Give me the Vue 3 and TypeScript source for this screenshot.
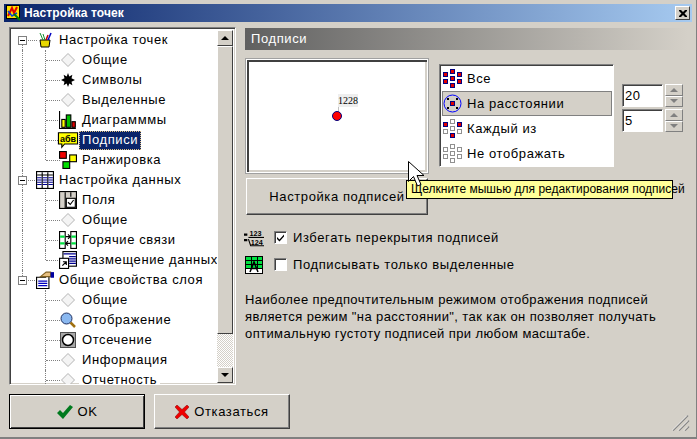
<script setup lang="ts">
interface TreeRow {
  label: string;
  icon: string;
  level: 0 | 1;
  selected?: boolean;
  last?: boolean;
  trunk?: boolean;
  end?: boolean;
}

const rows: TreeRow[] = [
  { label: 'Настройка точек', icon: 'pot', level: 0, trunk: true },
  { label: 'Общие', icon: 'diamond', level: 1, trunk: true },
  { label: 'Символы', icon: 'star', level: 1, trunk: true },
  { label: 'Выделенные', icon: 'diamond', level: 1, trunk: true },
  { label: 'Диаграмммы', icon: 'bars', level: 1, trunk: true },
  { label: 'Подписи', icon: 'note', level: 1, trunk: true, selected: true },
  { label: 'Ранжировка', icon: 'rank', level: 1, trunk: true, last: true },
  { label: 'Настройка данных', icon: 'table', level: 0, trunk: true },
  { label: 'Поля', icon: 'fields', level: 1, trunk: true },
  { label: 'Общие', icon: 'diamond', level: 1, trunk: true },
  { label: 'Горячие связи', icon: 'links', level: 1, trunk: true },
  { label: 'Размещение данных', icon: 'place', level: 1, trunk: true, last: true },
  { label: 'Общие свойства слоя', icon: 'hand', level: 0, end: true },
  { label: 'Общие', icon: 'diamond', level: 1 },
  { label: 'Отображение', icon: 'lens', level: 1 },
  { label: 'Отсечение', icon: 'clip', level: 1 },
  { label: 'Информация', icon: 'diamond', level: 1 },
  { label: 'Отчетность', icon: 'diamond', level: 1 },
];

const bigIcons = ['bars', 'note', 'rank', 'fields', 'links', 'place', 'table', 'hand'];

const dots: [number, number][] = [[7, 0], [0, 3], [14, 3], [7, 7], [0, 10], [14, 10], [7, 14]];

const modes = [
  { label: 'Все', on: [0, 1, 2, 3, 4, 5, 6] },
  { label: 'На расстоянии', on: [], ring: true },
  { label: 'Каждый из', on: [1, 2, 6] },
  { label: 'Не отображать', on: [] as number[] },
];

const spins = ['20', '5'];

const description =
  'Наиболее предпочтительным режимом отображения подписей является режим "на расстоянии", так как он позволяет получать оптимальную густоту подписей при любом масштабе.';
</script>

<template>
  <div class="window">
    <header class="titlebar">
      <svg class="title-icon" viewBox="0 0 16 16" aria-hidden="true">
        <rect x="0.5" y="0.5" width="13" height="13" fill="#ffe000" stroke="#000" />
        <path d="M2 11 6 3l2 5 3-6" fill="none" stroke="#e00000" stroke-width="2" />
        <path d="M2 6l4 5 5-3" fill="none" stroke="#0040e0" stroke-width="1.5" />
        <path d="M8 9l6 6" stroke="#008000" stroke-width="2" />
      </svg>
      <span class="title-text">Настройка точек</span>
      <button type="button" class="close" aria-label="Закрыть">
        <svg viewBox="0 0 8 7" width="8" height="7" aria-hidden="true">
          <path d="M0 0h2l2 2 2-2h2v1L5.500 3.500 8 6v1H6L4 5 2 7H0V6l2.500-2.500L0 1z" fill="#000" />
        </svg>
      </button>
    </header>

    <div class="content">
      <div class="tree-box">
        <ul class="tree">
          <li v-for="(row, i) in rows" :key="i" class="row" :class="`row--${row.level}`">
            <i v-if="row.trunk" class="guide guide--trunk" :class="{ 'guide--trunk-top': row.level === 0 && i === 0 }" />
            <i v-if="row.end" class="guide guide--trunk guide--trunk-end" />
            <template v-if="row.level === 1">
              <i class="guide guide--branch" :class="{ 'guide--branch-last': row.last }" />
              <i class="guide guide--tick" />
            </template>
            <template v-else>
              <i class="guide guide--tick-top" />
              <span class="expander"><i /></span>
            </template>

            <svg
              class="row-icon"
              :class="{ 'row-icon--big': bigIcons.includes(row.icon), 'row-icon--small': row.icon === 'star' }"
              viewBox="0 0 16 16"
              aria-hidden="true"
            >
              <template v-if="row.icon === 'diamond'">
                <path d="M8 1.500 14.500 8 8 14.500 1.500 8z" fill="#f4f4f4" stroke="#b4b4b4" />
              </template>
              <template v-else-if="row.icon === 'star'">
                <path d="M8 0 9.500 4 13 2l-1 4 4 2-4 2 1 4-3.500-2L8 16l-1.500-4L3 14l1-4-4-2 4-2-1-4 3.500 2z" fill="#000" />
              </template>
              <template v-else-if="row.icon === 'pot'">
                <path d="M3 8h10l-1 7H4z" fill="#e8d800" stroke="#000" />
                <path d="M3 1l3 7M6 2l2 6" stroke="#109030" stroke-width="1" />
                <path d="M9 8l2-5" stroke="#c00000" stroke-width="1.500" />
                <path d="M11 8l3-7" stroke="#0000c0" stroke-width="1.500" />
              </template>
              <template v-else-if="row.icon === 'bars'">
                <path d="M.5 0v15.500H15" fill="none" stroke="#000" />
                <rect x="2.500" y="7.500" width="3" height="7" fill="#ffff00" stroke="#000" />
                <rect x="6.500" y="3.500" width="4" height="11" fill="#00c000" stroke="#000" />
                <rect x="11.500" y="9.500" width="3" height="5" fill="#e00000" stroke="#000" />
              </template>
              <template v-else-if="row.icon === 'note'">
                <path d="M-.5 1.500h17v10H5l-2.500 3v-3H-.5z" fill="#ffff00" stroke="#000" />
                <text x="8" y="9.500" text-anchor="middle" class="note-text">абв</text>
              </template>
              <template v-else-if="row.icon === 'rank'">
                <rect x="0.500" y="0.500" width="6" height="6" fill="#f00000" stroke="#000" />
                <rect x="9.500" y="3.500" width="6" height="6" fill="#ffff00" stroke="#000" />
                <rect x="3.500" y="9.500" width="6" height="6" fill="#00e000" stroke="#000" />
              </template>
              <template v-else-if="row.icon === 'table'">
                <rect x="0.500" y="0.500" width="15" height="15" fill="#fff" stroke="#000" />
                <path d="M1 3.500h14M5.500 1v14M10.500 1v14" stroke="#000" />
                <path d="M6 6h4M6 8h4M6 10h4M6 12h4M11 6h4M11 8h4M11 10h4M11 12h4M1 6h4M1 8h4M1 10h4M1 12h4" stroke="#000090" />
              </template>
              <template v-else-if="row.icon === 'fields'">
                <rect x="0.500" y="0.500" width="15" height="15" fill="#d4d0c8" stroke="#000" />
                <path d="M5.500 1v14M10.500 1v4" stroke="#000" />
                <rect x="6.500" y="6.500" width="8" height="8" fill="#fff" stroke="#000" />
                <path d="M8 10l2 2 3-4" fill="none" stroke="#000" />
              </template>
              <template v-else-if="row.icon === 'links'">
                <rect x="0.500" y="0.500" width="5" height="15" fill="#fff" stroke="#000" />
                <rect x="10.500" y="0.500" width="5" height="15" fill="#fff" stroke="#000" />
                <path d="M1 4h4v2H1zM1 10h4v2H1zM11 4h4v2h-4zM11 10h4v2h-4z" fill="#00e040" />
                <path d="M6 5h4M8 3l2 2-2 2M10 11H6M8 9l-2 2 2 2" fill="none" stroke="#000" />
              </template>
              <template v-else-if="row.icon === 'place'">
                <rect x="3.500" y="0.500" width="12" height="13" fill="#fff" stroke="#000" />
                <path d="M4 2.500h11M9 5h6M9 7h6M9 9h6M9 11h6" stroke="#000090" />
                <rect x="0.500" y="6.500" width="8" height="9" fill="#fff" stroke="#000" />
                <path d="M3 13l3-3M3.500 9.500H6.500V12.500" fill="none" stroke="#000" />
              </template>
              <template v-else-if="row.icon === 'hand'">
                <path d="M.5 5.500h8l3-3v13H.5z" fill="#fff" stroke="#000" />
                <path d="M2 9h8M2 11h8M2 13h8" stroke="#0000c0" />
                <path d="M4 5l5-4h4v4H8z" fill="#e8c080" stroke="#806020" />
                <rect x="13" y="1" width="3" height="5" fill="#0000a0" />
              </template>
              <template v-else-if="row.icon === 'lens'">
                <circle cx="6.500" cy="6.500" r="5.500" fill="#8ab8f0" stroke="#203060" />
                <path d="M10.500 10.500 15 15" stroke="#a07010" stroke-width="2.500" />
              </template>
              <template v-else-if="row.icon === 'clip'">
                <rect x="0.500" y="0.500" width="15" height="15" fill="#a8a8a8" stroke="#505050" />
                <circle cx="8" cy="8" r="5.500" fill="#fff" stroke="#000" stroke-width="1.500" />
              </template>
            </svg>

            <span class="row-label" :class="{ 'row-label--selected': row.selected }">{{ row.label }}</span>
          </li>
        </ul>

        <div class="scrollbar">
          <button type="button" class="scroll-btn" aria-label="Вверх"><i class="arrow-up" /></button>
          <div class="scroll-thumb" />
          <div class="scroll-track" />
          <button type="button" class="scroll-btn" aria-label="Вниз"><i class="arrow-down" /></button>
        </div>
      </div>

      <section class="pane">
        <h2 class="pane-title">Подписи</h2>

        <div class="top">
          <div class="preview-col">
            <div class="preview">
              <span class="map-label">1228</span>
              <i class="map-leader" />
              <i class="map-dot" />
            </div>
            <button type="button" class="btn setup">Настройка подписей</button>
          </div>

          <ul class="modes">
            <li v-for="(mode, m) in modes" :key="m" class="mode" :class="{ 'mode--active': mode.ring }">
              <svg class="mode-icon" viewBox="0 0 19 19" aria-hidden="true">
                <template v-if="mode.ring">
                  <circle cx="9.500" cy="9.500" r="8.500" fill="none" stroke="#0000ff" />
                  <path d="M4 4h2v2H4zM7 7h1v1H7zM13 4h2v2h-2zM11 7h1v1h-1zM4 13h2v2H4zM7 11h1v1H7zM13 13h2v2h-2zM11 11h1v1h-1z" fill="#000" />
                  <rect x="7.500" y="7.500" width="4" height="4" fill="#e00000" stroke="#000080" />
                </template>
                <template v-else>
                  <rect
                    v-for="(d, k) in dots"
                    :key="k"
                    :x="d[0] + 0.5"
                    :y="d[1] + 0.5"
                    width="4"
                    height="4"
                    :fill="mode.on.includes(k) ? '#e00000' : '#fff'"
                    :stroke="mode.on.includes(k) ? '#000080' : '#909090'"
                  />
                </template>
              </svg>
              <span>{{ mode.label }}</span>
            </li>
          </ul>

          <div class="spins">
            <div v-for="s in spins" :key="s" class="spin">
              <input class="spin-input" :value="s" aria-label="Значение" />
              <div class="spin-btns">
                <button type="button" class="spin-btn" aria-label="Больше"><i class="tri-up" /></button>
                <button type="button" class="spin-btn" aria-label="Меньше"><i class="tri-down" /></button>
              </div>
            </div>
          </div>
        </div>

        <div class="options">
          <label class="option">
            <svg class="opt-icon" viewBox="0 0 18 16" aria-hidden="true">
              <path d="M0 4h3v2H0zM0 9h3v2H0z" fill="#000" />
              <text x="5" y="6.500" class="opt-num">123</text>
              <path d="M4 7.500h14" stroke="#000" />
              <text x="6" y="14.500" class="opt-num">124</text>
              <path d="M4 9l2 6h12" fill="none" stroke="#000" />
            </svg>
            <span class="check"><svg viewBox="0 0 9 9" width="9" height="9" aria-hidden="true"><path d="M1 4l2.500 2.500L8 1.500v2L3.500 8.500 1 6z" fill="#000" /></svg></span>
            <span>Избегать перекрытия подписей</span>
          </label>
          <label class="option">
            <svg class="opt-icon" viewBox="0 0 18 18" aria-hidden="true">
              <rect x="0.500" y="0.500" width="17" height="17" fill="#00e040" stroke="#000" />
              <path d="M1 4.500h16M1 8.500h16M1 12.500h16M6.500 1v12M12.500 1v12" stroke="#000" />
              <rect x="1" y="13" width="16" height="4" fill="#fff" />
              <path d="M5 16 9 6l4 10M6.500 12.500h5" fill="none" stroke="#000" stroke-width="1.500" />
            </svg>
            <span class="check" />
            <span>Подписывать только выделенные</span>
          </label>
        </div>

        <p class="description">{{ description }}</p>
      </section>
    </div>

    <footer class="footer">
      <button type="button" class="btn action action--default">
        <svg viewBox="0 0 16 14" width="16" height="14" aria-hidden="true">
          <path d="M0 8l3-3 3 3 7-8 3 2-10 12z" fill="#007a1e" />
        </svg>
        <span>OK</span>
      </button>
      <button type="button" class="btn action">
        <svg viewBox="0 0 14 14" width="14" height="14" aria-hidden="true">
          <path d="M2 0l5 4.500L12 0l2 2-4.500 5L14 12l-2 2-5-4.500L2 14l-2-2 4.500-5L0 2z" fill="#f00000" stroke="#800000" stroke-width=".5" />
        </svg>
        <span>Отказаться</span>
      </button>
    </footer>

    <div class="tooltip">Щелкните мышью для редактирования подписей</div>
    <svg class="cursor" viewBox="0 0 17 26" width="17" height="26" aria-hidden="true">
      <path d="M.5.500v20l5-5 4 9.500 3.500-1.500-4-9h7z" fill="#fff" stroke="#000" />
    </svg>
    <svg class="grip" viewBox="0 0 18 16" width="18" height="16" aria-hidden="true">
      <path d="M1 15.500 16 .5M7 15.500l10-10M13 15.500l4-4" stroke="#808080" stroke-width="1.500" />
      <path d="M0 15.500 15 .5M6 15.500l10-10M12 15.500l4-4" stroke="#fff" stroke-width=".8" />
    </svg>
  </div>
</template>

<style scoped>
* {
  box-sizing: border-box;
}

.window {
  position: relative;
  display: flex;
  flex-direction: column;
  width: 697px;
  height: 439px;
  padding: 4px 4px 0;
  overflow: hidden;
  background: #d4d0c8;
  border-right: 1px solid #808080;
  border-bottom: 2px solid #808080;
  font-family: "Liberation Sans", sans-serif;
  font-size: 13px;
  letter-spacing: 0.6px;
  color: #000;
}

.titlebar {
  display: flex;
  align-items: center;
  flex: none;
  height: 18px;
  padding: 0 2px 0 2px;
  background: linear-gradient(90deg, #0a246a, #a6caf0);
}

.title-icon {
  width: 16px;
  height: 16px;
}

.title-text {
  margin-left: 2px;
  font-size: 12px;
  font-weight: 700;
  letter-spacing: 0.1px;
  color: #fff;
}

.close {
  display: flex;
  align-items: center;
  justify-content: center;
  width: 15px;
  height: 14px;
  margin-left: auto;
  padding: 0;
  background: #d4d0c8;
  border: 1px solid;
  border-color: #fff #404040 #404040 #fff;
}

.content {
  display: flex;
  gap: 9px;
  flex: none;
  padding: 5px 0 0 5px;
}

.tree-box {
  position: relative;
  display: flex;
  flex: none;
  width: 227px;
  height: 358px;
  padding: 2px;
  overflow: hidden;
  background: #fff;
  border: 1px solid;
  border-color: #808080 #fff #fff #808080;
  box-shadow: inset 1px 1px 0 #404040, inset -1px -1px 0 #d4d0c8;
}

.tree {
  flex: 1;
  height: 354px;
  margin: 0;
  padding: 0;
  overflow: hidden;
  list-style: none;
}

.row {
  position: relative;
  display: flex;
  align-items: center;
  height: 20px;
  white-space: nowrap;
}

.row--0 {
  padding-left: 25px;
}

.row--1 {
  padding-left: 48px;
}

.row-label {
  position: relative;
  margin-left: 3px;
  padding: 0 2px 2px;
  line-height: 15px;
  border: 1px solid transparent;
  background: #fff;
}

.row-label--selected {
  color: #fff;
  background: #0a246a;
  border: 1px dotted #e0c080;
}

.guide {
  position: absolute;
  display: block;
}

.guide--trunk {
  left: 10px;
  top: 0;
  bottom: 0;
  border-left: 1px dotted #808080;
}

.guide--trunk-top {
  top: 10px;
}

.guide--trunk-end {
  bottom: 10px;
}

.guide--branch {
  left: 33px;
  top: 0;
  bottom: 0;
  border-left: 1px dotted #808080;
}

.guide--branch-last {
  bottom: 10px;
}

.guide--tick {
  left: 34px;
  top: 10px;
  width: 14px;
  border-top: 1px dotted #808080;
}

.guide--tick-top {
  left: 14px;
  top: 10px;
  width: 11px;
  border-top: 1px dotted #808080;
}

.expander {
  position: absolute;
  left: 6px;
  top: 6px;
  width: 9px;
  height: 9px;
  background: #fff;
  border: 1px solid #808080;
}

.expander i {
  position: absolute;
  left: 1px;
  top: 3px;
  width: 5px;
  height: 1px;
  background: #000;
}

.row-icon {
  position: relative;
  flex: none;
  width: 16px;
  height: 16px;
  overflow: visible;
}

.row-icon--big {
  width: 18px;
  height: 18px;
  margin: 0 -1px;
}

.row-icon--small {
  width: 14px;
  height: 14px;
  margin: 0 1px;
}

.note-text {
  font-family: "Liberation Sans", sans-serif;
  font-size: 8px;
  font-weight: 700;
  letter-spacing: 0;
}

.scrollbar {
  display: flex;
  flex: none;
  flex-direction: column;
  width: 16px;
  height: 353px;
}

.scroll-btn,
.scroll-thumb,
.spin-btn {
  background: #d4d0c8;
  border: 1px solid;
  border-color: #fff #404040 #404040 #fff;
}

.scroll-btn {
  display: flex;
  align-items: center;
  justify-content: center;
  flex: none;
  height: 16px;
  padding: 0;
}

.scroll-thumb {
  flex: none;
  height: 288px;
}

.scroll-track {
  flex: 1;
  background: repeating-conic-gradient(#d4d0c8 0 25%, #fff 0 50%) 0 0 / 2px 2px;
}

.arrow-up,
.arrow-down {
  display: block;
  width: 0;
  height: 0;
  border-left: 4px solid transparent;
  border-right: 4px solid transparent;
}

.arrow-up {
  border-bottom: 4px solid #000;
}

.arrow-down {
  border-top: 4px solid #000;
}

.pane {
  flex: none;
  width: 443px;
  padding-top: 1px;
}

.pane-title {
  height: 22px;
  margin: 0;
  padding-left: 6px;
  font-size: 13px;
  font-weight: 400;
  line-height: 21px;
  color: #fff;
  background: linear-gradient(90deg, #606060, #d4d0c8);
}

.top {
  display: flex;
  align-items: flex-start;
  margin-top: 8px;
}

.preview-col {
  flex: none;
  width: 184px;
}

.preview {
  position: relative;
  height: 116px;
  background: #fff;
  border: 2px solid;
  border-color: #fff;
  box-shadow: inset 2px 2px 0 #404040, inset -2px -2px 0 #d4d0c8;
  outline: 1px solid #a0a0a0;
  outline-offset: -1px;
}

.map-label {
  position: absolute;
  left: 91px;
  top: 34px;
  width: 20px;
  height: 13px;
  font-family: "Liberation Serif", serif;
  font-size: 10px;
  line-height: 13px;
  letter-spacing: 0;
  text-align: center;
  background: #eeeeee;
}

.map-leader {
  position: absolute;
  left: 91px;
  top: 47px;
  width: 1px;
  height: 5px;
  background: #c0c0c0;
}

.map-dot {
  position: absolute;
  left: 85px;
  top: 51px;
  width: 10px;
  height: 10px;
  background: #ff0000;
  border: 1px solid #000080;
  border-radius: 50%;
}

.btn {
  padding: 0;
  font: inherit;
  letter-spacing: inherit;
  color: #000;
  background: #d4d0c8;
  border: 1px solid;
  border-color: #fff #404040 #404040 #fff;
  box-shadow: inset -1px -1px 0 #808080;
}

.setup {
  display: block;
  width: 182px;
  height: 37px;
  margin: 4px 0 0 1px;
  white-space: nowrap;
}

.modes {
  flex: none;
  width: 175px;
  height: 103px;
  margin: 6px 0 0 10px;
  padding: 1px 1px 1px 2px;
  list-style: none;
  background: #fff;
  border: 1px solid;
  border-color: #808080 #fff #fff #808080;
  box-shadow: inset 1px 1px 0 #404040;
}

.mode {
  display: flex;
  align-items: center;
  gap: 5px;
  height: 25px;
  padding-left: 1px;
}

.mode--active {
  background: #d4d0c8;
  border: 1px solid #808080;
  padding-left: 0;
}

.mode-icon {
  flex: none;
  width: 19px;
  height: 19px;
}

.spins {
  display: flex;
  flex: none;
  flex-direction: column;
  gap: 2px;
  margin: 26px 0 0 8px;
}

.spin {
  display: flex;
  gap: 2px;
}

.spin-input {
  width: 41px;
  height: 23px;
  padding: 0 0 0 2px;
  font: inherit;
  letter-spacing: inherit;
  background: #fff;
  border: 1px solid;
  border-color: #808080 #fff #fff #808080;
  box-shadow: inset 1px 1px 0 #404040;
  outline: none;
}

.spin-btns {
  display: flex;
  flex-direction: column;
  width: 18px;
  height: 23px;
}

.spin-btn {
  display: flex;
  align-items: center;
  justify-content: center;
  flex: 1;
  padding: 0;
  border-color: #fff #808080 #808080 #fff;
}

.tri-up,
.tri-down {
  display: block;
  width: 0;
  height: 0;
  border-left: 4px solid transparent;
  border-right: 4px solid transparent;
}

.tri-up {
  border-bottom: 4px solid #808080;
}

.tri-down {
  border-top: 4px solid #808080;
}

.options {
  margin-top: 9px;
}

.option {
  display: flex;
  align-items: center;
  height: 27px;
}

.opt-icon {
  flex: none;
  width: 20px;
  height: 18px;
  margin-left: -1px;
}

.opt-num {
  font-family: "Liberation Sans", sans-serif;
  font-size: 6.5px;
  font-weight: 700;
  letter-spacing: 0;
}

.check {
  display: flex;
  align-items: center;
  justify-content: center;
  flex: none;
  width: 13px;
  height: 13px;
  margin: 0 6px 0 10px;
  background: #fff;
  border: 1px solid;
  border-color: #808080 #fff #fff #808080;
  box-shadow: inset 1px 1px 0 #404040;
}

.description {
  width: 440px;
  margin: 13px 0 0;
  line-height: 17px;
  letter-spacing: 0.4px;
}

.footer {
  display: flex;
  gap: 9px;
  flex: none;
  padding: 9px 0 0 5px;
}

.action {
  display: flex;
  align-items: center;
  justify-content: center;
  gap: 5px;
  width: 136px;
  height: 35px;
}

.action--default {
  border: 1px solid #000;
  box-shadow: inset 1px 1px 0 #fff, inset -1px -1px 0 #404040;
}

.tooltip {
  position: absolute;
  left: 406px;
  top: 180px;
  width: 267px;
  height: 19px;
  padding-left: 4px;
  font-size: 12px;
  line-height: 17px;
  letter-spacing: 0;
  white-space: nowrap;
  background: #ffff99;
  border: 1px solid #000;
}

.cursor {
  position: absolute;
  left: 408px;
  top: 161px;
}

.grip {
  position: absolute;
  left: 672px;
  top: 415px;
}
</style>

<style>
html,
body {
  margin: 0;
  background: #d4d0c8;
}
</style>
